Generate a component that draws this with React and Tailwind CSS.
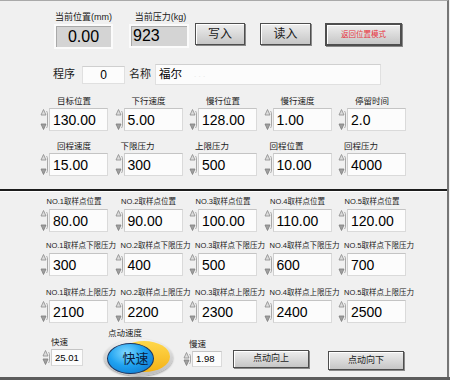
import React from 'react'

const font = { fontFamily: '"Liberation Sans","Noto Sans CJK SC",sans-serif' }

const Spinner = ({ h = 23 }) => (
    <svg width="8" height={h} viewBox={`0 0 8 ${h}`} className="shrink-0">
        <path d={`M6.5 3 Q7.5 4 7.5 6 L7.5 ${h - 6} Q7.5 ${h - 4} 6.5 ${h - 3}`} fill="none" stroke="#a8a8a8" strokeWidth="1" />
        <path d="M1 7 L3.5 1.5 L6 7 Z" fill="#dcdcdc" stroke="#8c8c8c" strokeWidth="0.8" />
        <path d={`M1 ${h - 7} L6 ${h - 7} L3.5 ${h - 1.5} Z`} fill="#a0a0a0" stroke="#7c7c7c" strokeWidth="0.8" />
    </svg>
)

const NumBox = ({ value, w = 'w-[59px]', h = 'h-[23px]', text = 'text-[14px]' }) => (
    <div className={`${w} ${h} ${text} ml-[1px] flex items-center pl-[3px] bg-[#fcfcfc] border border-[#dadada] border-t-[#c4c4c4] border-l-[#cfcfcf] text-black leading-none`}>
        {value}
    </div>
)

// label alignment: 'c' centered over cell, 'l' left with small offset
const Field = ({ label, value, align = 'c', small = false }) => (
    <div className="w-[74.5px] shrink-0 flex flex-col">
        <div
            className={`h-[12px] whitespace-nowrap leading-[12px] text-[#202020] ${small ? 'text-[7.5px]' : 'text-[8.5px]'} ${align === 'c' ? 'w-[68px] text-center' : 'pl-[6px]'}`}
        >
            {label}
        </div>
        <div className="flex items-center mt-[1px]">
            <Spinner />
            <NumBox value={value} />
        </div>
    </div>
)

const Btn = ({ children, className = '' }) => (
    <button
        className={`flex items-center justify-center border border-[#4e4e4e] bg-gradient-to-b from-[#eeeeee] to-[#c6c6c6] shadow-[inset_1px_1px_0_#ffffff,1px_1px_0_#8a8a8a] ${className}`}
    >
        {children}
    </button>
)

export default function App() {
    const row1 = [
        ['目标位置', '130.00'], ['下行速度', '5.00'], ['慢行位置', '128.00'], ['慢行速度', '1.00'], ['停留时间', '2.0'],
    ]
    const row2 = [
        ['回程速度', '15.00', 'c'], ['下限压力', '300', 'l'], ['上限压力', '500', 'l'], ['回程位置', '10.00', 'l'], ['回程压力', '4000', 'l'],
    ]
    const pos = ['80.00', '90.00', '100.00', '110.00', '120.00']
    const low = ['300', '400', '500', '600', '700']
    const high = ['2100', '2200', '2300', '2400', '2500']

    return (
        <div className="w-[450px] h-[380px] bg-[#f0f0f0] overflow-hidden border-b-[3px] border-[#5c5c5c]" style={font}>
            <div className="w-[449px] h-full border-r-2 border-r-[#767676] border-t border-t-[#a9a9a9] flex flex-col">
                {/* top panel */}
                <div className="flex items-start pl-[54px] pt-[10px]">
                    <div className="flex flex-col w-[59px]">
                        <div className="h-[12px] leading-[12px] text-[9px] text-[#202020] text-center whitespace-nowrap">当前位置(mm)</div>
                        <div className="mt-[1px] h-[25px] border-2 border-[#fbfbfb] bg-[#d4d4d4] shadow-[inset_1px_1px_0_#a9a9a9] flex items-center justify-center text-[16px] text-black">0.00</div>
                    </div>
                    <div className="flex flex-col w-[60px] ml-[16px]">
                        <div className="h-[12px] leading-[12px] text-[9px] text-[#202020] text-center whitespace-nowrap pl-[3px]">当前压力(kg)</div>
                        <div className="mt-[1px] h-[24px] border-2 border-[#fbfbfb] bg-[#d4d4d4] shadow-[inset_1px_1px_0_#a9a9a9] flex items-center pl-[2px] text-[16px] text-black">923</div>
                    </div>
                    <Btn className="ml-[6px] mt-[12px] w-[50px] h-[22px] text-[12px] text-[#1a1a1a]">写入</Btn>
                    <Btn className="ml-[15px] mt-[12px] w-[51px] h-[22px] text-[12px] text-[#1a1a1a]">读入</Btn>
                    <Btn className="ml-[14px] mt-[12px] w-[77px] h-[23px] text-[7.5px] text-[#e8323c] border-[#3e3e3e] border-2">返回位置模式</Btn>
                </div>

                <div className="flex items-center pl-[53px] mt-[15px] h-[21px]">
                    <span className="text-[11px] text-[#1c1c1c] w-[29px]">程序</span>
                    <div className="w-[43px] h-[18px] bg-[#fcfcfc] border border-[#e0e0e0] border-t-[#cfcfcf] flex items-center justify-center text-[12px] text-black">0</div>
                    <span className="text-[11px] text-[#1c1c1c] ml-[4px] w-[26px]">名称</span>
                    <div className="w-[226px] h-[21px] bg-[#fcfcfc] border border-[#e0e0e0] border-t-[#d0d0d0] flex items-center pl-[3px] text-[11.5px] text-black">
                        福尔<span className="ml-[12px] text-[#e4e4e4] text-[8px]">. . .</span>
                    </div>
                </div>

                <div className="flex pl-[40px] mt-[10px]">
                    {row1.map(([l, v]) => <Field key={l} label={l} value={v} />)}
                </div>
                <div className="flex pl-[40px] mt-[9px]">
                    {row2.map(([l, v, a]) => <Field key={l} label={l} value={v} align={a} />)}
                </div>

                {/* divider */}
                <div className="mt-[13px] h-[2px] bg-[#1c1c1c] shrink-0" />
                <div className="h-[1px] bg-[#ffffff] shrink-0" />

                {/* sampling points */}
                <div className="flex pl-[40px] mt-[4px]">
                    {pos.map((v, i) => <Field key={i} small label={`NO.${i + 1}取样点位置`} value={v} />)}
                </div>
                <div className="flex pl-[40px] mt-[8px]">
                    {low.map((v, i) => <Field key={i} small align="l" label={`NO.${i + 1}取样点下限压力`} value={v} />)}
                </div>
                <div className="flex pl-[40px] mt-[11px]">
                    {high.map((v, i) => <Field key={i} small align="l" label={`NO.${i + 1}取样点上限压力`} value={v} />)}
                </div>

                {/* jog row */}
                <div className="flex items-start pl-[42px] mt-[5px]">
                    <div className="flex flex-col mt-[8px]">
                        <div className="h-[12px] leading-[12px] text-[8.5px] text-[#202020] pl-[9px]">快速</div>
                        <div className="flex items-center mt-[1px]">
                            <Spinner h={17} />
                            <NumBox value="25.01" w="w-[32px]" h="h-[17px]" text="text-[9.5px]" />
                        </div>
                    </div>
                    <div className="flex flex-col ml-[21px]">
                        <div className="h-[10px] leading-[10px] text-[8.5px] text-[#202020] pl-[4px]">点动速度</div>
                        <div className="relative w-[69px] h-[37px] mt-[1px] rounded-[50%] bg-gradient-to-b from-[#f2f2f2] via-[#d2d2d2] to-[#bdbdbd] shadow-[0_1px_2px_#9a9a9a]">
                            <div className="absolute left-[14px] top-[2px] w-[52px] h-[31px] rounded-[50%] bg-gradient-to-b from-[#ffd84a] to-[#f4b20e]" />
                            <div className="absolute left-[3px] top-[4px] w-[47px] h-[31px] rounded-[50%] border border-[#173563] bg-[radial-gradient(ellipse_at_40%_30%,#7fd8ff_0%,#1fa2f0_45%,#0a6fc8_100%)] flex items-center justify-center">
                                <span className="text-[13px] text-[#0c1e40] pl-[10px]">快速</span>
                            </div>
                        </div>
                    </div>
                    <div className="flex flex-col ml-[10px] mt-[10px]">
                        <div className="h-[12px] leading-[12px] text-[8.5px] text-[#202020] pl-[6px]">慢速</div>
                        <div className="flex items-center mt-[1px]">
                            <Spinner h={16} />
                            <NumBox value="1.98" w="w-[30px]" h="h-[16px]" text="text-[9.5px]" />
                        </div>
                    </div>
                    <Btn className="ml-[11px] mt-[22px] w-[76px] h-[18px] text-[9px] text-[#1c1c1c]">点动向上</Btn>
                    <Btn className="ml-[19px] mt-[23px] w-[76px] h-[19px] text-[9px] text-[#1c1c1c]">点动向下</Btn>
                </div>
            </div>
        </div>
    )
}
